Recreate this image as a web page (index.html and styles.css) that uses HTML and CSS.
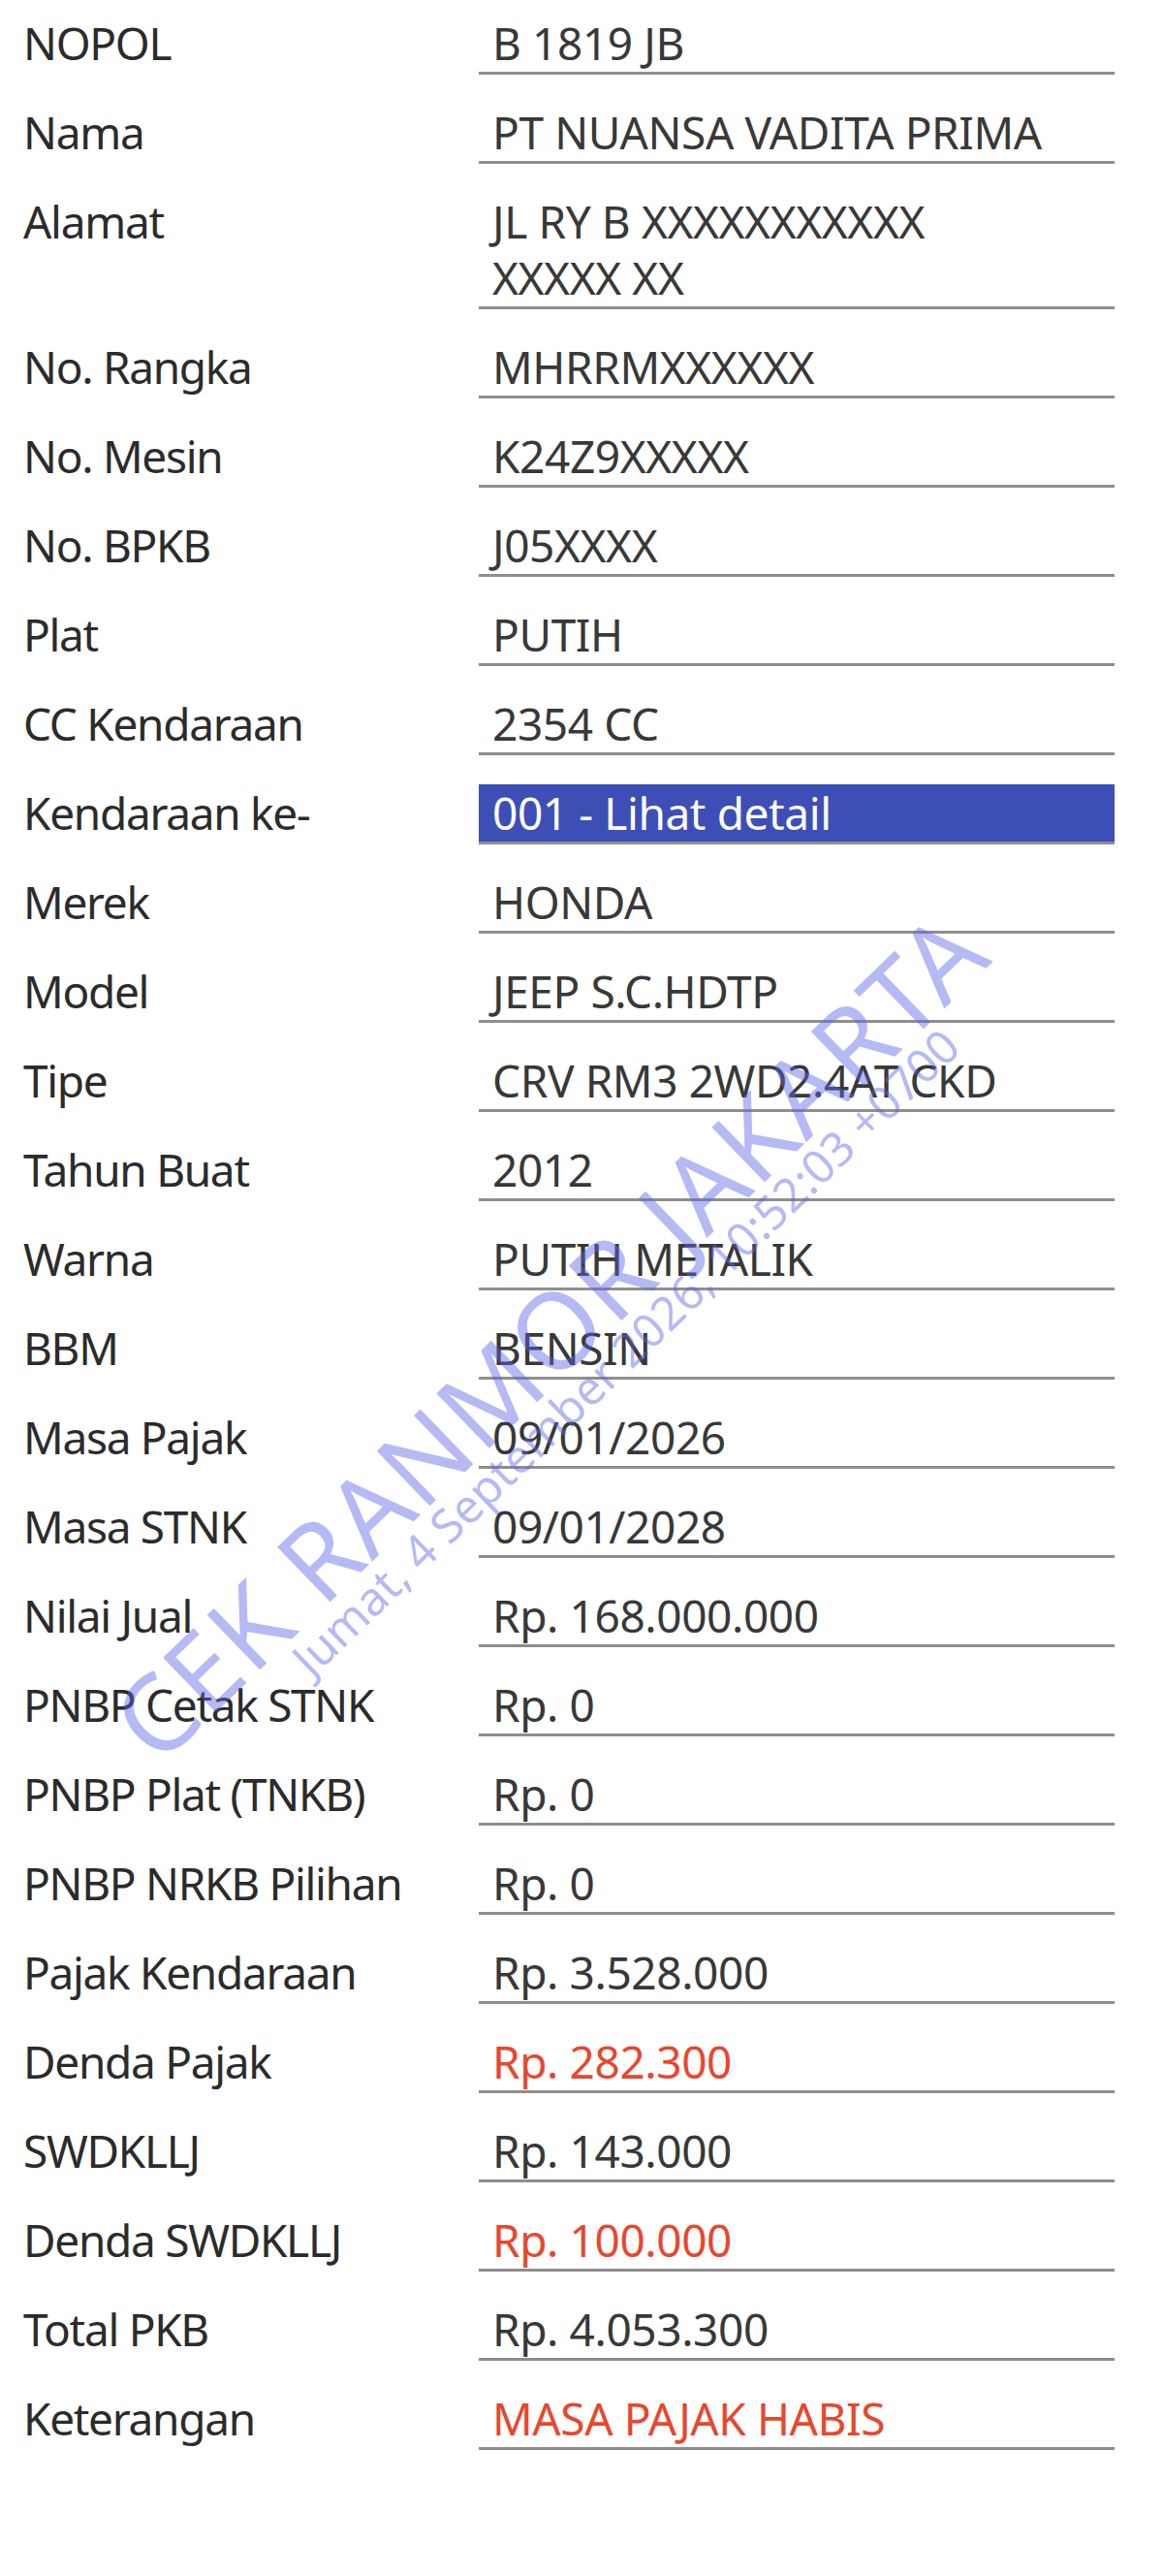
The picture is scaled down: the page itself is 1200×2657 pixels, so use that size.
FILE: index.html
```html
<!DOCTYPE html>
<html lang="id">
<head>
<meta charset="utf-8">
<title>Cek Ranmor Jakarta</title>
<link rel="stylesheet" href="styles.css">
</head>
<body>
<div class="page">
  <div class="rows">
    <div class="row"><div class="label">NOPOL</div><div class="value">B 1819 JB</div></div>
    <div class="row"><div class="label">Nama</div><div class="value">PT NUANSA VADITA PRIMA</div></div>
    <div class="row"><div class="label">Alamat</div><div class="value">JL RY B XXXXXXXXXXX<br>XXXXX XX</div></div>
    <div class="row"><div class="label">No. Rangka</div><div class="value">MHRRMXXXXXX</div></div>
    <div class="row"><div class="label">No. Mesin</div><div class="value">K24Z9XXXXX</div></div>
    <div class="row"><div class="label">No. BPKB</div><div class="value">J05XXXX</div></div>
    <div class="row"><div class="label">Plat</div><div class="value">PUTIH</div></div>
    <div class="row"><div class="label">CC Kendaraan</div><div class="value">2354 CC</div></div>
    <div class="row"><div class="label">Kendaraan ke-</div><div class="value value-link">001 - Lihat detail</div></div>
    <div class="row"><div class="label">Merek</div><div class="value">HONDA</div></div>
    <div class="row"><div class="label">Model</div><div class="value">JEEP S.C.HDTP</div></div>
    <div class="row"><div class="label">Tipe</div><div class="value">CRV RM3 2WD2.4AT CKD</div></div>
    <div class="row"><div class="label">Tahun Buat</div><div class="value">2012</div></div>
    <div class="row"><div class="label">Warna</div><div class="value">PUTIH METALIK</div></div>
    <div class="row"><div class="label">BBM</div><div class="value">BENSIN</div></div>
    <div class="row"><div class="label">Masa Pajak</div><div class="value">09/01/2026</div></div>
    <div class="row"><div class="label">Masa STNK</div><div class="value">09/01/2028</div></div>
    <div class="row"><div class="label">Nilai Jual</div><div class="value">Rp. 168.000.000</div></div>
    <div class="row"><div class="label">PNBP Cetak STNK</div><div class="value">Rp. 0</div></div>
    <div class="row"><div class="label">PNBP Plat (TNKB)</div><div class="value">Rp. 0</div></div>
    <div class="row"><div class="label">PNBP NRKB Pilihan</div><div class="value">Rp. 0</div></div>
    <div class="row"><div class="label">Pajak Kendaraan</div><div class="value">Rp. 3.528.000</div></div>
    <div class="row"><div class="label">Denda Pajak</div><div class="value value-alert">Rp. 282.300</div></div>
    <div class="row"><div class="label">SWDKLLJ</div><div class="value">Rp. 143.000</div></div>
    <div class="row"><div class="label">Denda SWDKLLJ</div><div class="value value-alert">Rp. 100.000</div></div>
    <div class="row"><div class="label">Total PKB</div><div class="value">Rp. 4.053.300</div></div>
    <div class="row"><div class="label">Keterangan</div><div class="value value-alert">MASA PAJAK HABIS</div></div>
  </div>
  <div class="wm wm-big">CEK RANMOR JAKARTA</div>
  <div class="wm wm-small">Jumat, 4 September 2026, 10:52:03 +0700</div>
</div>
</body>
</html>
```
FILE: styles.css
```css
html, body {
  margin: 0;
  padding: 0;
  background: #ffffff;
}

.page {
  position: relative;
  width: 1200px;
  min-height: 2657px;
  box-sizing: border-box;
  padding: 15px 50px 0 24px;
  overflow: hidden;
  font-family: "Noto Sans", "Open Sans", sans-serif;
  font-size: 46px;
}

.rows {
  display: flex;
  flex-direction: column;
  gap: 30px;
}

.row {
  display: grid;
  grid-template-columns: 470px 656px;
  align-items: start;
}

.label {
  line-height: 58px;
  color: #2b2b2b;
  letter-spacing: -1.3px;
  white-space: nowrap;
}

.value {
  line-height: 58px;
  color: #383838;
  letter-spacing: -0.4px;
  padding: 0 0 1px 14px;
  border-bottom: 3px solid #8e8e8e;
  white-space: nowrap;
}

.value-link {
  background: #3d4fb6;
  color: #ffffff;
}

.value-alert {
  color: #e8472d;
}

.wm {
  position: absolute;
  left: 0;
  top: 0;
  color: rgba(90, 100, 230, 0.45);
  white-space: nowrap;
  transform-origin: 0 100%;
  pointer-events: none;
}

.wm-big {
  font-size: 110px;
  line-height: 110px;
  letter-spacing: 2px;
  transform: translate(172px, 1722px) rotate(-44deg);
}

.wm-small {
  font-size: 48px;
  line-height: 48px;
  transform: translate(326px, 1688px) rotate(-44deg);
}
```
